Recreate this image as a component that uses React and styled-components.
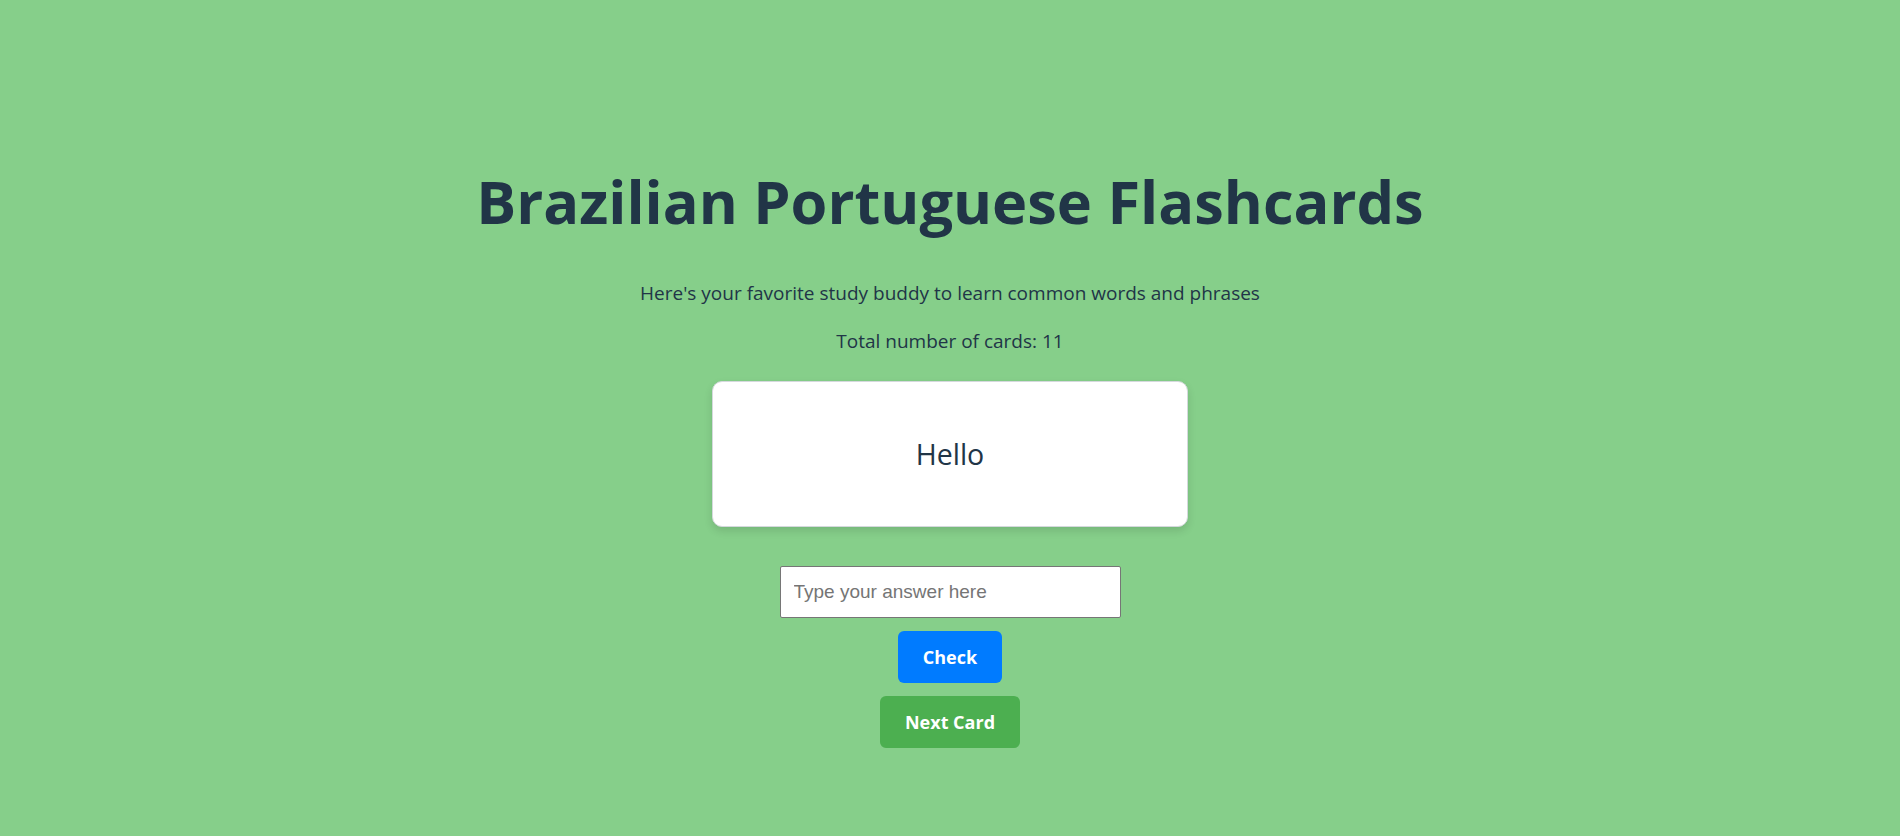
import React, { useState } from "react";
import styled, { createGlobalStyle } from "styled-components";

const GlobalStyle = createGlobalStyle`
  html, body {
    margin: 0;
    padding: 0;
    background-color: #86cf8a;
  }
  body {
    font-family: "Open Sans", "Noto Sans", sans-serif;
    color: #213547;
    min-height: 100vh;
  }
`;

const Page = styled.div`
  min-height: 836px;
  display: flex;
  flex-direction: column;
  align-items: center;
  padding-top: 161px;
  box-sizing: border-box;
`;

const Title = styled.h1`
  margin: 0;
  font-size: 59.5px;
  font-weight: 700;
  line-height: 80px;
  color: #213547;
`;

const Text = styled.p`
  margin: ${(props) => props.top || 0}px 0 0;
  font-size: 19px;
  line-height: 26px;
  color: #213547;
`;

const Card = styled.div`
  margin-top: 27px;
  width: 476px;
  height: 146px;
  box-sizing: border-box;
  display: flex;
  align-items: center;
  justify-content: center;
  background: #ffffff;
  border: 1px solid #d5d9dd;
  border-radius: 10px;
  box-shadow: 0 4px 8px rgba(0, 0, 0, 0.12);
  font-size: 28.5px;
  color: #213547;
`;

const AnswerForm = styled.form`
  margin-top: 39px;
  display: flex;
  flex-direction: column;
  align-items: center;
  gap: 13px;
`;

const AnswerInput = styled.input`
  width: 341px;
  height: 52px;
  box-sizing: border-box;
  padding: 0 13px;
  border: 1px solid #767676;
  border-radius: 2px;
  background: #ffffff;
  font-family: "Liberation Sans", Arial, sans-serif;
  font-size: 19px;
  color: #213547;
  outline: none;

  &::placeholder {
    color: #757575;
  }
`;

const Button = styled.button`
  height: 52px;
  padding: 0 25px;
  border: none;
  border-radius: 6px;
  background-color: ${(props) => props.bg};
  color: #ffffff;
  font-family: "Open Sans", "Noto Sans", sans-serif;
  font-size: 18px;
  font-weight: 700;
  cursor: pointer;
`;

const App = () => {
  const [answer, setAnswer] = useState("");

  return (
    <>
      <GlobalStyle />
      <Page>
        <Title>Brazilian Portuguese Flashcards</Title>
        <Text top={39}>
          Here's your favorite study buddy to learn common words and phrases
        </Text>
        <Text top={22}>Total number of cards: 11</Text>
        <Card>Hello</Card>
        <AnswerForm onSubmit={(e) => e.preventDefault()}>
          <AnswerInput
            placeholder="Type your answer here"
            value={answer}
            onChange={(e) => setAnswer(e.target.value)}
          />
          <Button type="submit" bg="#007bff">
            Check
          </Button>
          <Button type="button" bg="#4caf50">
            Next Card
          </Button>
        </AnswerForm>
      </Page>
    </>
  );
};

export default App;
